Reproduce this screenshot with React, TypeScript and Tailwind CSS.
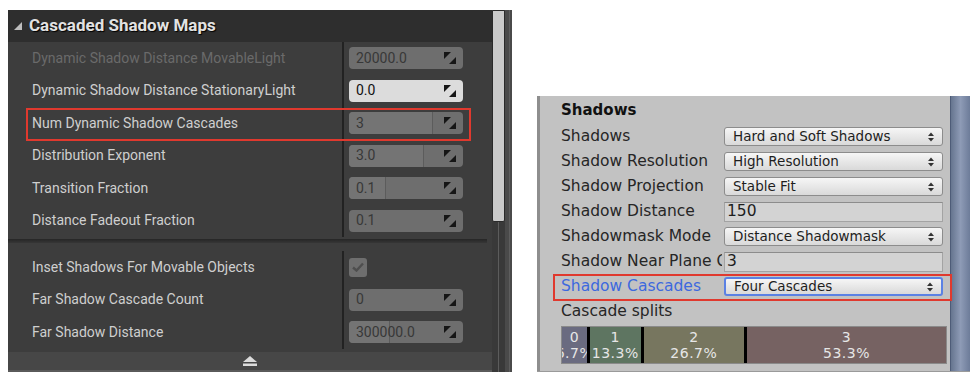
import clsx from "clsx";

type UeRow = { label: string; value?: string; disabled?: boolean; active?: boolean; fill?: number; check?: boolean };

const mainRows: UeRow[] = [
  { label: "Dynamic Shadow Distance MovableLight", value: "20000.0", disabled: true },
  { label: "Dynamic Shadow Distance StationaryLight", value: "0.0", active: true },
  { label: "Num Dynamic Shadow Cascades", value: "3", fill: 84 },
  { label: "Distribution Exponent", value: "3.0", fill: 75 },
  { label: "Transition Fraction", value: "0.1", fill: 37 },
  { label: "Distance Fadeout Fraction", value: "0.1" },
];

const farRows: UeRow[] = [
  { label: "Inset Shadows For Movable Objects", check: true },
  { label: "Far Shadow Cascade Count", value: "0" },
  { label: "Far Shadow Distance", value: "300000.0", fill: 41 },
];

type UnityRow = { label: string; kind: "popup" | "field"; value: string; focus?: boolean };

const unityRows: UnityRow[] = [
  { label: "Shadows", kind: "popup", value: "Hard and Soft Shadows" },
  { label: "Shadow Resolution", kind: "popup", value: "High Resolution" },
  { label: "Shadow Projection", kind: "popup", value: "Stable Fit" },
  { label: "Shadow Distance", kind: "field", value: "150" },
  { label: "Shadowmask Mode", kind: "popup", value: "Distance Shadowmask" },
  { label: "Shadow Near Plane Offset", kind: "field", value: "3" },
  { label: "Shadow Cascades", kind: "popup", value: "Four Cascades", focus: true },
];

const splits = [
  { id: "0", pct: "6.7%", width: 25, color: "bg-[#6a6b80]" },
  { id: "1", pct: "13.3%", width: 51, color: "bg-[#5e7561]" },
  { id: "2", pct: "26.7%", width: 101, color: "bg-[#77765f]" },
  { id: "3", pct: "53.3%", width: 200, color: "bg-[#766262]" },
];

const SpinIcon = () => (
  <svg width="12" height="12" viewBox="0 0 12 12" className="absolute right-[7px]">
    <polygon points="0,0 7,0 0,7" fill="#161616" />
    <polygon points="12,5 12,12 5,12" fill="#161616" />
  </svg>
);

const UeInput = ({ row }: { row: UeRow }) => (
  <div
    className={clsx("relative flex h-[22px] w-[114px] items-center overflow-hidden rounded-[4px]", {
      "bg-[#dcdcdc] text-[#111]": row.active,
      "bg-[#6e6e6e] text-[#383838]": !row.active,
    })}
  >
    {row.fill ? <div className="absolute left-0 top-0 h-full border-r border-[#5c5c5c] bg-[#747474]" style={{ width: row.fill }} /> : null}
    <span className="relative pl-[7px] text-[14px]">{row.value}</span>
    <SpinIcon />
  </div>
);

const UeCheck = () => (
  <div className="flex h-[19px] w-[18px] items-center justify-center rounded-[3px] bg-[#6e6e6e]">
    <svg width="12" height="10" viewBox="0 0 12 10">
      <path d="M1 5.5 L4.5 8.5 L11 1.5" stroke="#4e4e4e" strokeWidth="2.4" fill="none" />
    </svg>
  </div>
);

const UeRows = ({ rows }: { rows: UeRow[] }) => (
  <div className="flex flex-col">
    {rows.map((row) => (
      <div key={row.label} className="flex h-[32.5px] items-stretch">
        <div
          className={clsx("flex w-[334px] items-center pl-[24px] text-[14px] whitespace-nowrap", {
            "text-[#6a6a6a]": row.disabled,
            "text-[#cfcfcf]": !row.disabled,
          })}
        >
          {row.label}
        </div>
        <div className="w-[2px] bg-[#222]" />
        <div className="flex items-center pl-[5px]">{row.check ? <UeCheck /> : <UeInput row={row} />}</div>
      </div>
    ))}
  </div>
);

const UnrealPanel = () => (
  <div className="relative ml-[8px] mt-[10px] flex h-[362px] w-[504px] bg-[#3d3d3d] font-['Roboto',sans-serif]">
    <div className="flex w-[484px] flex-col">
      <div className="flex h-[32px] items-center gap-[7px] bg-[#2e2e2e] pl-[6px]">
        <svg width="8" height="8" viewBox="0 0 8 8">
          <polygon points="8,0 8,8 0,8" fill="#bdbdbd" />
        </svg>
        <span className="text-[17px] font-bold text-[#e2e2e2] [text-shadow:1px_1px_1px_#000]">Cascaded Shadow Maps</span>
      </div>
      <UeRows rows={mainRows} />
      <div className="h-[14px] pr-[5px] pt-[2px]">
        <div className="h-[4px] bg-gradient-to-b from-[#262626] to-[#363636]" />
      </div>
      <UeRows rows={farRows} />
      <div className="mt-auto flex h-[20px] items-center justify-center border-b-[2px] border-[#5a5a5a] bg-[#474747]">
        <svg width="14" height="10" viewBox="0 0 14 10">
          <polygon points="0,6 7,0 14,6" fill="#dcdcdc" />
          <rect x="0" y="7.5" width="14" height="2.5" fill="#dcdcdc" />
        </svg>
      </div>
    </div>
    <div className="flex w-[13px] flex-col bg-[#393939]">
      <div className="h-[212px] rounded-b-[2px] border border-[#2a2a2a] bg-[#cacaca]" />
      <div className="mx-auto w-[1px] flex-1 bg-[#5c5c5c]" />
    </div>
    <div className="flex w-[7px] bg-[#4a4a4a]">
      <div className="ml-[4px] w-[1px] bg-[#5e5e5e]" />
    </div>
    <div className="absolute left-[18px] top-[98px] h-[33px] w-[445px] border-2 border-[#e0392e]" />
  </div>
);

const PopupArrows = () => (
  <svg width="6" height="10" viewBox="0 0 6 10" className="absolute right-[8px]">
    <polygon points="0,4 3,0.5 6,4" fill="#333" />
    <polygon points="0,6 3,9.5 6,6" fill="#333" />
  </svg>
);

const UnityControl = ({ row }: { row: UnityRow }) => {
  if (row.kind === "field") {
    return (
      <div className="flex h-[20px] w-[219px] items-center border border-[#a3a3a3] border-t-[#8c8c8c] bg-[#d3d3d3] pl-[2px] text-[15.5px] text-[#1e1e1e]">
        {row.value}
      </div>
    );
  }
  return (
    <div
      className={clsx(
        "relative flex h-[19px] w-[219px] items-center rounded-[3px] bg-gradient-to-b from-[#f6f6f6] to-[#d9d9d9] pl-[8px] text-[13.5px] text-[#1e1e1e]",
        { "border-2 border-[#5b81e4]": row.focus, "border border-[#8c8c8c]": !row.focus },
      )}
    >
      {row.value}
      <PopupArrows />
    </div>
  );
};

const UnityPanel = () => (
  <div className="relative ml-[25px] mt-[96px] flex h-[276px] w-[433px] border-b border-[#9a9a9a] bg-[#c2c2c2] font-['DejaVu_Sans',sans-serif]">
    <div className="w-[3px] bg-[#8e8e8e]" />
    <div className="flex w-[410px] flex-col pl-[21px]">
      <div className="flex h-[28px] items-center text-[15px] font-bold text-[#111]">Shadows</div>
      {unityRows.map((row) => (
        <div key={row.label} className="flex h-[25px] items-center">
          <div
            className={clsx("w-[161px] mr-[2px] overflow-hidden whitespace-nowrap text-[15.5px]", {
              "text-[#3d69de]": row.focus,
              "text-[#262626]": !row.focus,
            })}
          >
            {row.label}
          </div>
          <UnityControl row={row} />
        </div>
      ))}
      <div className="flex h-[25px] items-center text-[15.5px] text-[#262626]">Cascade splits</div>
      <div className="mt-[2px] flex h-[38px] w-[386px] gap-[3px] border border-[#8a8a8a] bg-black">
        {splits.map((s) => (
          <div
            key={s.id}
            className={clsx("flex flex-col items-center justify-center overflow-hidden text-[14px] leading-[16px] tracking-[0.5px] text-[#e6e6e6]", s.color)}
            style={{ width: s.width }}
          >
            <span>{s.id}</span>
            <span className="whitespace-nowrap">{s.pct}</span>
          </div>
        ))}
      </div>
    </div>
    <div className="w-[20px] border-l border-[#4e5c78] bg-gradient-to-r from-[#66758f] via-[#8e9bb6] to-[#6d7c99]" />
    <div className="absolute left-[16px] top-[178px] h-[27px] w-[399px] border-2 border-[#e0392e]" />
  </div>
);

export default function App() {
  return (
    <div className="flex h-[387px] w-[977px] items-start bg-white">
      <UnrealPanel />
      <UnityPanel />
    </div>
  );
}
